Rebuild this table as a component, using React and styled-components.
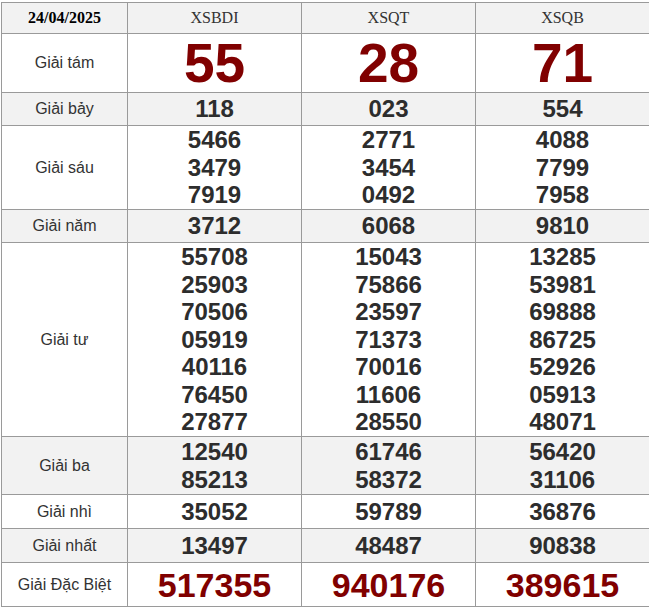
import React from 'react';
import styled, { createGlobalStyle } from 'styled-components';

const GlobalStyle = createGlobalStyle`
  html, body {
    margin: 0;
    padding: 0;
    background: #fff;
    overflow: hidden;
  }
`;

const Wrapper = styled.div`
  width: 660px;
  padding: 2px 0 0 1px;
`;

const Table = styled.table`
  border-collapse: collapse;
  table-layout: fixed;
  width: 648px;
  border: 1px solid #9a9a9a;
`;

const Row = styled.tr`
  height: ${({ h }) => h}px;
  background-color: ${({ gray }) => (gray ? '#f2f2f2' : '#ffffff')};
`;

const HeadCell = styled.th`
  border: 1px solid #9a9a9a;
  padding: 0;
  font-family: 'Liberation Serif', 'Times New Roman', serif;
  font-size: 16px;
  font-weight: ${({ bold }) => (bold ? 'bold' : 'normal')};
  color: ${({ bold }) => (bold ? '#000' : '#333')};
  text-align: center;
  vertical-align: middle;
`;

const Label = styled.td`
  border: 1px solid #9a9a9a;
  padding: 0;
  font-family: 'Liberation Sans', Arial, sans-serif;
  font-size: 16px;
  color: #333;
  text-align: center;
  vertical-align: middle;
`;

const Cell = styled.td`
  border: 1px solid #9a9a9a;
  padding: 0;
  font-family: 'Liberation Sans', Arial, sans-serif;
  font-weight: bold;
  text-align: center;
  vertical-align: middle;
`;

const Num = styled.div`
  font-size: ${({ size }) => size}px;
  line-height: ${({ lh }) => lh}px;
  color: ${({ red }) => (red ? '#800000' : '#2d2d2d')};
`;

const provinces = ['XSBDI', 'XSQT', 'XSQB'];

const prizes = [
  { name: 'Giải tám', h: 59, size: 55, lh: 58, red: true, values: [['55'], ['28'], ['71']] },
  { name: 'Giải bảy', h: 33, gray: true, values: [['118'], ['023'], ['554']] },
  {
    name: 'Giải sáu',
    h: 84,
    values: [
      ['5466', '3479', '7919'],
      ['2771', '3454', '0492'],
      ['4088', '7799', '7958'],
    ],
  },
  { name: 'Giải năm', h: 33, gray: true, values: [['3712'], ['6068'], ['9810']] },
  {
    name: 'Giải tư',
    h: 194,
    values: [
      ['55708', '25903', '70506', '05919', '40116', '76450', '27877'],
      ['15043', '75866', '23597', '71373', '70016', '11606', '28550'],
      ['13285', '53981', '69888', '86725', '52926', '05913', '48071'],
    ],
  },
  {
    name: 'Giải ba',
    h: 58,
    gray: true,
    values: [
      ['12540', '85213'],
      ['61746', '58372'],
      ['56420', '31106'],
    ],
  },
  { name: 'Giải nhì', h: 34, values: [['35052'], ['59789'], ['36876']] },
  { name: 'Giải nhất', h: 34, gray: true, values: [['13497'], ['48487'], ['90838']] },
  { name: 'Giải Đặc Biệt', h: 44, size: 34, lh: 40, red: true, values: [['517355'], ['940176'], ['389615']] },
];

const App = () => {
  return (
    <Wrapper>
      <GlobalStyle />
      <Table>
        <colgroup>
          <col style={{ width: '126px' }} />
          <col style={{ width: '174px' }} />
          <col style={{ width: '174px' }} />
          <col style={{ width: '174px' }} />
        </colgroup>
        <thead>
          <Row h={31} gray>
            <HeadCell bold>24/04/2025</HeadCell>
            {provinces.map((p) => (
              <HeadCell key={p}>{p}</HeadCell>
            ))}
          </Row>
        </thead>
        <tbody>
          {prizes.map((prize) => (
            <Row key={prize.name} h={prize.h} gray={prize.gray}>
              <Label>{prize.name}</Label>
              {prize.values.map((list, i) => (
                <Cell key={i}>
                  {list.map((v) => (
                    <Num key={v} size={prize.size || 24} lh={prize.lh || 27.5} red={prize.red}>
                      {v}
                    </Num>
                  ))}
                </Cell>
              ))}
            </Row>
          ))}
        </tbody>
      </Table>
    </Wrapper>
  );
};

export default App;
